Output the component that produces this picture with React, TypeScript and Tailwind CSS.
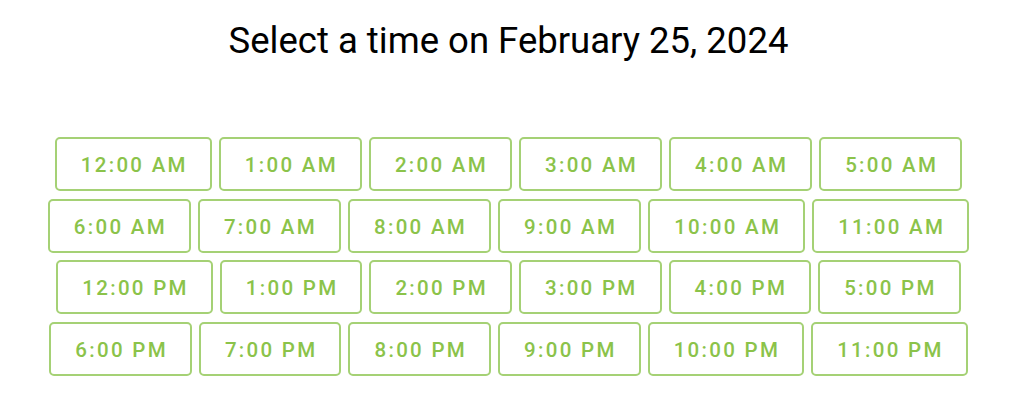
import React from "react";

const rows: string[][] = [
  ["12:00 AM", "1:00 AM", "2:00 AM", "3:00 AM", "4:00 AM", "5:00 AM"],
  ["6:00 AM", "7:00 AM", "8:00 AM", "9:00 AM", "10:00 AM", "11:00 AM"],
  ["12:00 PM", "1:00 PM", "2:00 PM", "3:00 PM", "4:00 PM", "5:00 PM"],
  ["6:00 PM", "7:00 PM", "8:00 PM", "9:00 PM", "10:00 PM", "11:00 PM"],
];

const App: React.FC = () => {
  return (
    <div
      className="w-full min-h-[401px] bg-white pr-[7px]"
      style={{ fontFamily: "Roboto, 'Liberation Sans', sans-serif" }}
    >
      {/* Heading */}
      <h1 className="pt-[20px] text-center text-[36.5px] leading-[42px] text-black">
        Select a time on February 25, 2024
      </h1>

      {/* Time slots */}
      <div className="mt-[75px] flex flex-col gap-[7.5px]">
        {rows.map((row, i) => (
          <div key={i} className="flex justify-center gap-[7px]">
            {row.map((time) => (
              <button
                key={time}
                className="h-[54px] pl-[24px] pr-[22px] pt-[3px] flex items-center justify-center rounded-[5px] border-2 border-[#a5d175] text-[20.5px] font-medium tracking-[2.3px] text-[#8bc34a] bg-white"
              >
                {time}
              </button>
            ))}
          </div>
        ))}
      </div>
    </div>
  );
};

export default App;
